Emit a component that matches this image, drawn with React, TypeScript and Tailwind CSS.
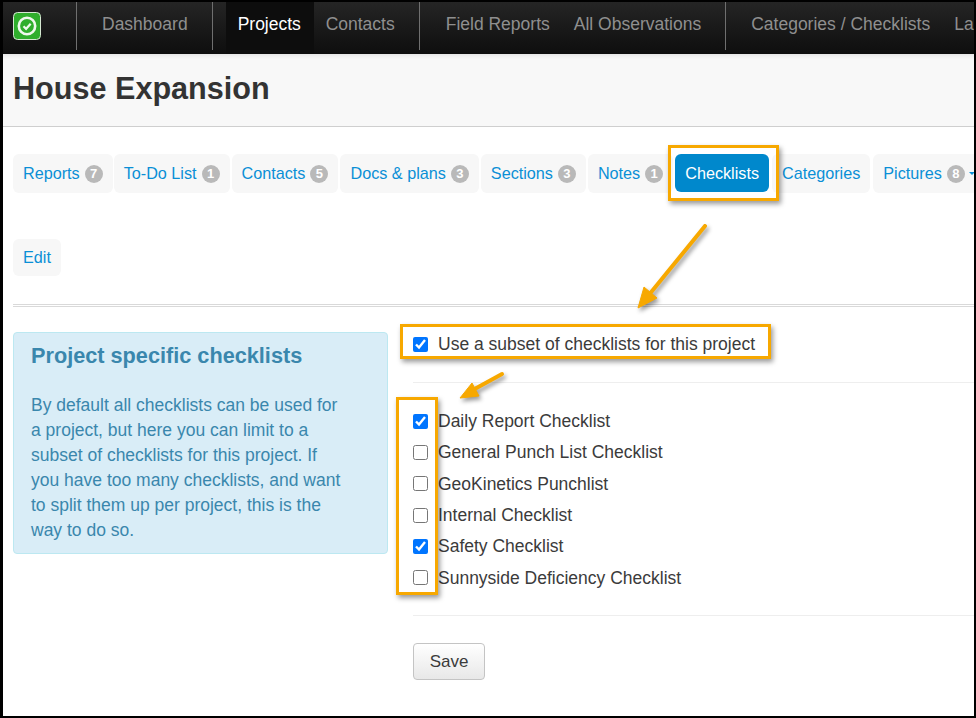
import React from "react";

const FONT = "font-['Liberation_Sans',Arial,sans-serif]";

const tabs = [
  { label: "Reports", count: 7, className: "mr-[-1px]" },
  { label: "To-Do List", count: 1 },
  { label: "Contacts", count: 5 },
  { label: "Docs & plans", count: 3 },
  { label: "Sections", count: 3 },
  { label: "Notes", count: 1 },
  { label: "Checklists", active: true },
  { label: "Categories", className: "mr-[1px]" },
  { label: "Pictures", count: 8, more: true },
];

const checklists = [
  { label: "Daily Report Checklist", checked: true },
  { label: "General Punch List Checklist", checked: false },
  { label: "GeoKinetics Punchlist", checked: false },
  { label: "Internal Checklist", checked: false },
  { label: "Safety Checklist", checked: true },
  { label: "Sunnyside Deficiency Checklist", checked: false },
];

const Logo = () => (
  <svg width="28" height="28" viewBox="0 0 28 28" className="shrink-0">
    <rect x="0.5" y="0.5" width="27" height="27" rx="4" fill="#2fae2c" stroke="#d5e8d2" />
    <circle cx="14" cy="14" r="8.2" fill="none" stroke="#eef8ec" strokeWidth="2.6" />
    <path d="M10.5 14.2l2.6 2.6 4.6-5" fill="none" stroke="#eef8ec" strokeWidth="2.2" />
  </svg>
);

const Sep = () => <div className="w-px h-[48px] self-start bg-[#6f6f6f] shrink-0" />;

const NavLink = ({ label, className = "" }: { label: string; className?: string }) => (
  <a className={`flex items-center h-full pb-[8px] text-[17.5px] text-[#8f8f8f] whitespace-nowrap shrink-0 ${className}`}>{label}</a>
);

const Tab = ({ label, count, active, more, className = "" }: { label: string; count?: number; active?: boolean; more?: boolean; className?: string }) => (
  <a
    className={`flex items-center px-[10px] rounded-[6px] whitespace-nowrap shrink-0 text-[16.2px] ${
      active ? "h-[38px] mr-[1px] bg-[#0088cc] text-white" : "h-[39px] bg-[#f7f7f7] text-[#0a8fd6]"
    } ${className}`}
  >
    {label}
    {count !== undefined && (
      <span className="ml-[5px] flex items-center justify-center w-[18px] h-[18px] rounded-full bg-[#b9b9b9] text-white text-[13px] font-bold">
        {count}
      </span>
    )}
    {more && <span className="ml-[4px] w-0 h-0 border-x-[3px] border-x-transparent border-t-[3px] border-t-[#0a8fd6]" />}
  </a>
);

const Box = ({ className }: { className: string }) => (
  <div className={`absolute border-[3px] border-[#f7a800] shadow-[2px_3px_5px_rgba(0,0,0,0.4)] pointer-events-none ${className}`} />
);

export default function App() {
  return (
    <div className={`relative w-[976px] h-[718px] overflow-hidden bg-white border-l-[3px] border-r-[2px] border-t-[2px] border-b-[2px] border-black ${FONT}`}>
      {/* top nav */}
      <nav className="flex items-stretch h-[52px] overflow-hidden bg-gradient-to-b from-[#252525] to-[#0e0e0e]">
        <div className="flex items-center pl-[10px] w-[73px] shrink-0 pb-[4px]">
          <Logo />
        </div>
        <Sep />
        <NavLink label="Dashboard" className="pl-[25px] pr-[24px]" />
        <Sep />
        <NavLink label="Projects" className="ml-[13px] px-[12px] w-[88px] text-white bg-[#0d0d0d]" />
        <NavLink label="Contacts" className="pl-[12px] pr-[24px]" />
        <Sep />
        <NavLink label="Field Reports" className="pl-[26px] pr-[24px]" />
        <NavLink label="All Observations" className="pr-[24px]" />
        <Sep />
        <NavLink label="Categories / Checklists" className="pl-[25px] pr-[24px]" />
        <NavLink label="La" />
      </nav>

      {/* page title */}
      <header className="h-[73px] flex items-center pl-[10px] pb-[3px] bg-[#f8f8f8] border-b border-[#cfcfcf] shadow-[inset_0_6px_6px_-6px_rgba(0,0,0,0.15)]">
        <h1 className="text-[30.6px] font-bold text-[#333333]">House Expansion</h1>
      </header>

      {/* tabs */}
      <div className="pl-[10px] pt-[27px] overflow-hidden">
        <div className="flex gap-[2px]">
          {tabs.map((t) => (
            <Tab key={t.label} {...t} />
          ))}
        </div>
        <div className="flex mt-[46px]">
          <a className="flex items-center h-[37px] px-[10px] rounded-[6px] bg-[#f7f7f7] text-[#0a8fd6] text-[16.2px]">Edit</a>
        </div>
      </div>

      <div className="ml-[10px] mt-[28px] h-[3px] border-y border-[#d9d9d9]" />

      {/* body */}
      <div className="flex pl-[10px] pt-[25px]">
        <aside className="w-[375px] h-[222px] shrink-0 pl-[17px] pr-[18px] pt-[8px] rounded-[4px] bg-[#d9edf7] border border-[#bce8f1] text-[#3a87ad]">
          <h2 className="text-[21.7px] leading-[30px] font-bold">Project specific checklists</h2>
          <p className="mt-[22px] text-[17.5px] leading-[25px] w-[315px]">
            By default all checklists can be used for a project, but here you can limit to a subset of checklists for this project. If you have too many checklists, and want to split them up per project, this is the way to do so.
          </p>
        </aside>

        <section className="ml-[25px] flex-1 text-[#3b3b3b] text-[17.5px]">
          <label className="flex items-center h-[24px]">
            <input type="checkbox" defaultChecked className="w-[15px] h-[15px] m-0 accent-[#0075ff]" />
            <span className="ml-[10px]">Use a subset of checklists for this project</span>
          </label>
          <div className="mt-[26px] border-t border-[#eeeeee]" />
          <div className="mt-[22.5px] flex flex-col">
            {checklists.map((c) => (
              <label key={c.label} className="flex items-center h-[31.3px]">
                <input type="checkbox" defaultChecked={c.checked} className="w-[15px] h-[15px] m-0 accent-[#0075ff]" />
                <span className="ml-[10px]">{c.label}</span>
              </label>
            ))}
          </div>
          <div className="mt-[21.5px] border-t border-[#eeeeee]" />
          <button className="mt-[27px] w-[72px] h-[37px] rounded-[4px] border border-[#c4c4c4] bg-gradient-to-b from-white to-[#e8e8e8] text-[17px] text-[#3b3b3b]">
            Save
          </button>
        </section>
      </div>

      {/* orange annotations on top of the screenshot */}
      <Box className="left-[665px] top-[143px] w-[111px] h-[56px]" />
      <Box className="left-[397px] top-[322px] w-[371px] h-[35px]" />
      <Box className="left-[393px] top-[395px] w-[42px] h-[198px]" />
      <svg className="absolute left-0 top-0 pointer-events-none" width="971" height="714" viewBox="0 0 971 714">
        <g fill="#f7a800" stroke="#f7a800" style={{ filter: "drop-shadow(2px 3px 2px rgba(0,0,0,0.4))" }}>
          <path d="M702 224L645 294" strokeWidth="4" strokeLinecap="round" fill="none" />
          <path d="M635 306l6-21 13 11z" strokeWidth="1" />
          <path d="M499 372L468 389" strokeWidth="4" strokeLinecap="round" fill="none" />
          <path d="M457 396l12-15 7 13z" strokeWidth="1" />
        </g>
      </svg>
    </div>
  );
}
